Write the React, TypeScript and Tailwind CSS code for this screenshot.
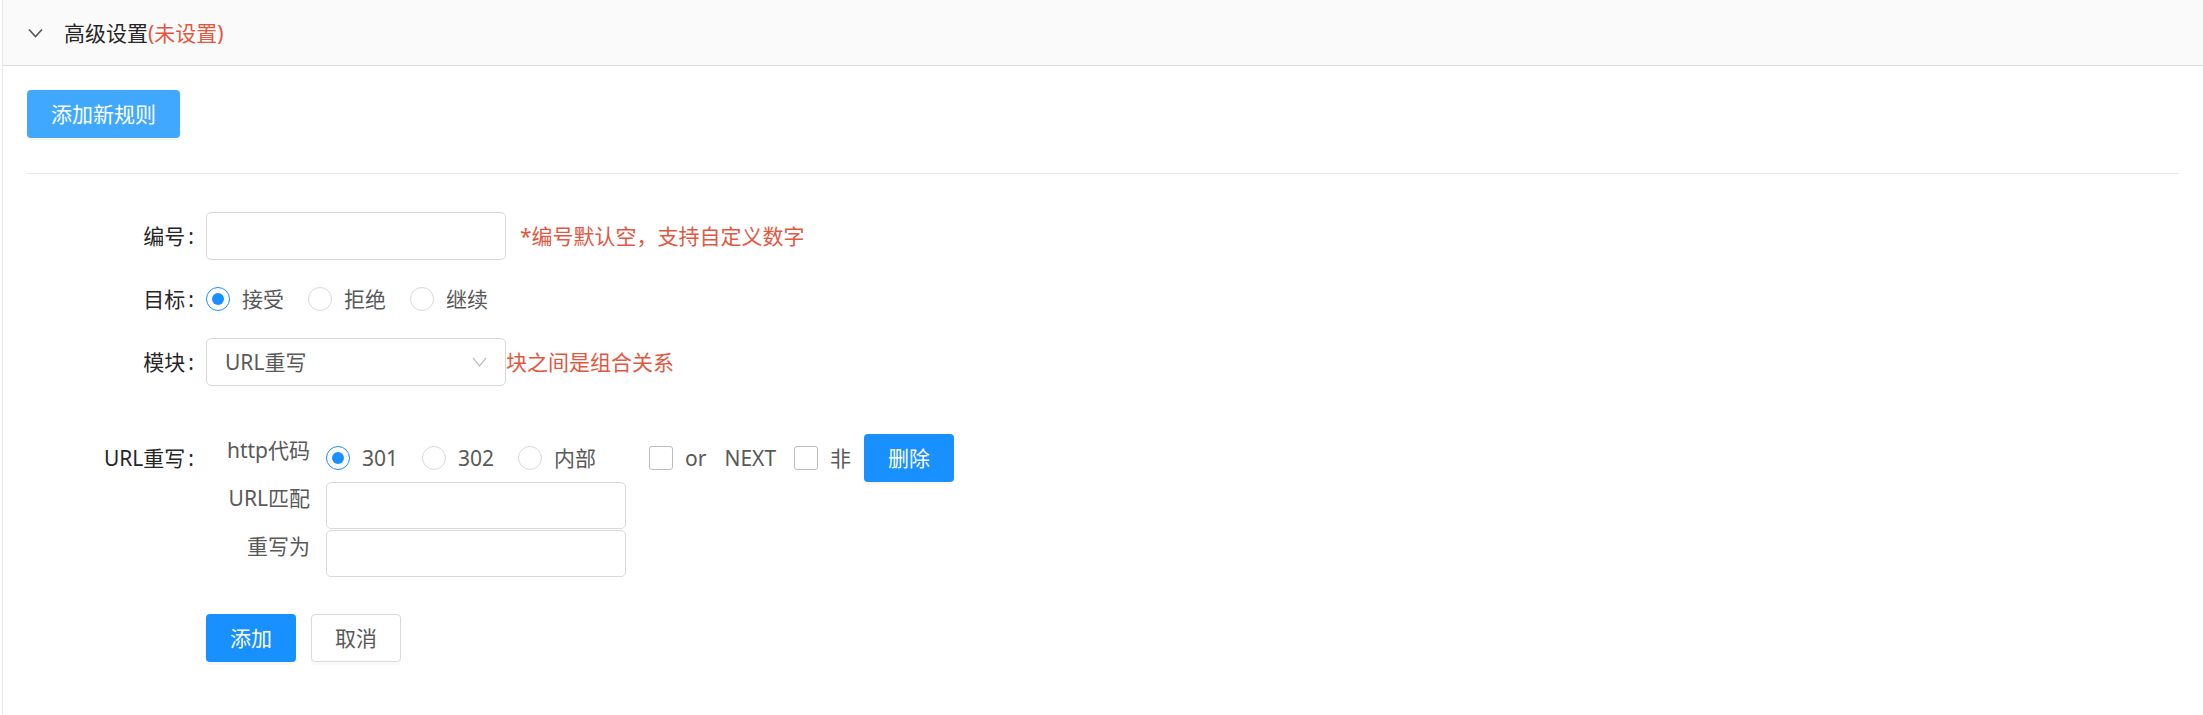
import React from "react";

const FONT = { fontFamily: '"Noto Sans", "Noto Sans CJK SC", sans-serif' };

function Radio({ checked, label }: { checked?: boolean; label: string }) {
  return (
    <label className="flex items-center mr-[12px]">
      <span
        className={
          "w-[24px] h-[24px] rounded-full border flex items-center justify-center bg-white " +
          (checked ? "border-[#1890ff]" : "border-[#d9d9d9]")
        }
      >
        {checked && <span className="w-[12px] h-[12px] rounded-full bg-[#1890ff]" />}
      </span>
      <span className="px-[12px] text-[#595959] leading-[32px]">{label}</span>
    </label>
  );
}

function Checkbox() {
  return <span className="w-[24px] h-[24px] border border-[#bdbdbd] rounded-[3px] bg-white" />;
}

function Label({ text }: { text: string }) {
  return (
    <div className="w-[167px] mr-[12px] text-right text-[#262626] leading-[32px] whitespace-nowrap">
      {text}
      <span className="ml-[3px]">:</span>
    </div>
  );
}

export default function App() {
  return (
    <div className="min-h-[715px] ml-[2px] border-l border-[#e8e8e8] bg-white text-[21px]" style={FONT}>
      <div className="h-[66px] bg-[#fafafa] border-b border-[#d9d9d9] flex items-center pl-[25px]">
        <svg width="15" height="10" viewBox="0 0 15 10" className="shrink-0">
          <polyline points="1,1.5 7.5,8.5 14,1.5" fill="none" stroke="#555" strokeWidth="1.6" />
        </svg>
        <div className="ml-[21px] leading-[32px] text-[#262626] whitespace-nowrap">
          高级设置<span className="text-[#e2573f]">(未设置)</span>
        </div>
      </div>

      <div className="pl-[24px] pr-[24px] pt-[24px]">
        <button className="h-[48px] px-[24px] rounded-[4px] bg-[#40a9ff] text-white leading-[32px] shadow-[0_3px_0_rgba(0,0,0,0.03)]">
          添加新规则
        </button>
        <div className="mt-[35px] h-px bg-[#e8e8e8]" />

        <div className="mt-[38px]">
          {/* 编号 */}
          <div className="flex items-center h-[48px]">
            <Label text="编号" />
            <div className="w-[300px] h-[48px] border border-[#d9d9d9] rounded-[5px] bg-white" />
            <span className="ml-[14px] text-[#e2573f] leading-[32px] whitespace-nowrap">*编号默认空，支持自定义数字</span>
          </div>

          {/* 目标 */}
          <div className="flex items-center h-[48px] mt-[15px]">
            <Label text="目标" />
            <div className="flex items-center">
              <Radio checked label="接受" />
              <Radio label="拒绝" />
              <Radio label="继续" />
            </div>
          </div>

          {/* 模块 */}
          <div className="flex items-center h-[48px] mt-[15px]">
            <Label text="模块" />
            <div className="w-[300px] h-[48px] border border-[#d9d9d9] rounded-[5px] bg-white flex items-center justify-between pl-[18px] pr-[18px]">
              <span className="text-[#595959] leading-[32px]">URL重写</span>
              <svg width="15" height="10" viewBox="0 0 15 10">
                <polyline points="1,1 7.5,9 14,1" fill="none" stroke="#bfbfbf" strokeWidth="1.2" />
              </svg>
            </div>
            <span className="text-[#e2573f] leading-[32px] whitespace-nowrap">块之间是组合关系</span>
          </div>

          {/* URL重写 */}
          <div className="flex items-start mt-[48px]">
            <div className="h-[48px] flex items-center">
              <Label text="URL重写" />
            </div>
            <div className="flex flex-col">
              <div className="flex items-start h-[48px]">
                <div className="w-[104px] mr-[16px] text-right text-[#595959] leading-[32px] whitespace-nowrap">http代码</div>
                <div className="flex items-center h-[48px]">
                  <Radio checked label="301" />
                  <Radio label="302" />
                  <Radio label="内部" />
                  <span className="ml-[29px] flex items-center">
                    <Checkbox />
                    <span className="ml-[12px] text-[#595959] leading-[32px]">or</span>
                    <span className="ml-[18px] text-[#595959] leading-[32px]">NEXT</span>
                    <span className="ml-[18px] flex"><Checkbox /></span>
                    <span className="ml-[12px] text-[#595959] leading-[32px]">非</span>
                  </span>
                  <button className="ml-[13px] h-[48px] w-[90px] rounded-[4px] bg-[#1890ff] text-white leading-[32px] shadow-[0_3px_0_rgba(0,0,0,0.03)]">
                    删除
                  </button>
                </div>
              </div>
              <div className="flex items-start">
                <div className="w-[104px] mr-[16px] text-right text-[#595959] leading-[32px] whitespace-nowrap">URL匹配</div>
                <div className="w-[300px] h-[47px] border border-[#d9d9d9] rounded-[5px] bg-white" />
              </div>
              <div className="flex items-start mt-[1px]">
                <div className="w-[104px] mr-[16px] text-right text-[#595959] leading-[32px] whitespace-nowrap">重写为</div>
                <div className="w-[300px] h-[47px] border border-[#d9d9d9] rounded-[5px] bg-white" />
              </div>
            </div>
          </div>

          {/* buttons */}
          <div className="flex items-center mt-[37px] ml-[179px]">
            <button className="h-[48px] w-[90px] rounded-[4px] bg-[#1890ff] text-white leading-[32px] shadow-[0_3px_0_rgba(0,0,0,0.03)]">
              添加
            </button>
            <button className="ml-[15px] h-[48px] w-[90px] rounded-[4px] border border-[#d9d9d9] bg-white text-[#595959] leading-[32px] shadow-[0_3px_0_rgba(0,0,0,0.02)]">
              取消
            </button>
          </div>
        </div>
      </div>
    </div>
  );
}
